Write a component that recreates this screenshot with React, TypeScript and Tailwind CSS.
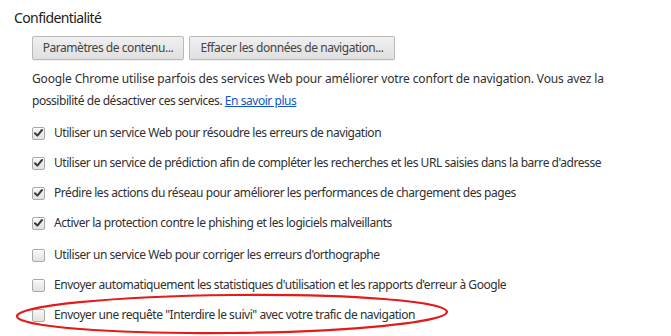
import React from 'react';

interface OptionRowProps {
    label: string;
    checked?: boolean;
    className?: string;
}

const CheckMark: React.FC = () => (
    <svg width="9" height="8" viewBox="0 0 9 8" className="block">
        <path d="M1 4.2 L3.4 6.6 L8 1" fill="none" stroke="#3a3a3a" strokeWidth="2" strokeLinecap="round" strokeLinejoin="round" />
    </svg>
);

const OptionRow: React.FC<OptionRowProps> = ({ label, checked, className }) => (
    <div className={`flex items-center h-[30px] ${className ?? ''}`}>
        <span className="flex items-center justify-center w-[13px] h-[13px] rounded-[2px] border border-[#a9a9a9] bg-gradient-to-b from-[#f8f8f8] to-[#e2e2e2] shadow-[inset_0_1px_0_#fff]">
            {checked && <CheckMark />}
        </span>
        <span className="ml-[9px]">{label}</span>
    </div>
);

const Button: React.FC<{ children: React.ReactNode; width: string }> = ({ children, width }) => (
    <button className={`h-[24px] ${width} rounded-[2px] border border-[#b9b9b9] bg-gradient-to-b from-[#f0f0f0] to-[#e0e0e0] text-[#444] shadow-[0_1px_0_rgba(0,0,0,0.06)]`}>
        {children}
    </button>
);

export default function App() {
    const options = [
        { label: 'Utiliser un service Web pour résoudre les erreurs de navigation', checked: true },
        { label: "Utiliser un service de prédiction afin de compléter les recherches et les URL saisies dans la barre d'adresse", checked: true },
        { label: 'Prédire les actions du réseau pour améliorer les performances de chargement des pages', checked: true },
        { label: 'Activer la protection contre le phishing et les logiciels malveillants', checked: true },
        { label: "Utiliser un service Web pour corriger les erreurs d'orthographe", checked: false },
        { label: "Envoyer automatiquement les statistiques d'utilisation et les rapports d'erreur à Google", checked: false },
    ];

    return (
        <div className="relative w-[671px] h-[336px] bg-white overflow-hidden font-['Noto_Sans',sans-serif] text-[12px] tracking-[-0.45px] text-[#303030]">
            <div className="pl-[14px] pt-[8px]">
                <h3 className="text-[14px] leading-[20px] tracking-[-0.6px] text-[#1a1a1a]">Confidentialité</h3>
                <div className="pl-[18px]">
                    <div className="flex gap-[5px] mt-[8px]">
                        <Button width="w-[152px]">Paramètres de contenu...</Button>
                        <Button width="w-[206px]">Effacer les données de navigation...</Button>
                    </div>
                    <p className="mt-[8px] leading-[22px]">
                        <span className="tracking-[-0.14px]">
                            Google Chrome utilise parfois des services Web pour améliorer votre confort de navigation. Vous avez la
                        </span>
                        <br />
                        possibilité de désactiver ces services.{' '}
                        <a className="text-[#15c] underline">En savoir plus</a>
                    </p>
                    <div className="flex flex-col mt-[6px]">
                        {options.map((o, i) => (
                            <OptionRow key={i} label={o.label} checked={o.checked} className={i === 4 ? 'mt-[2px]' : ''} />
                        ))}
                        <OptionRow label={'Envoyer une requête "Interdire le suivi" avec votre trafic de navigation'} />
                    </div>
                </div>
            </div>
            {/* red highlight drawn over the last option */}
            <svg className="absolute left-0 top-0 pointer-events-none" width="671" height="336">
                <ellipse cx="232" cy="314" rx="215" ry="19" fill="none" stroke="#e41b1b" strokeWidth="2.2" transform="rotate(-0.6 232 314)" />
            </svg>
        </div>
    );
}
